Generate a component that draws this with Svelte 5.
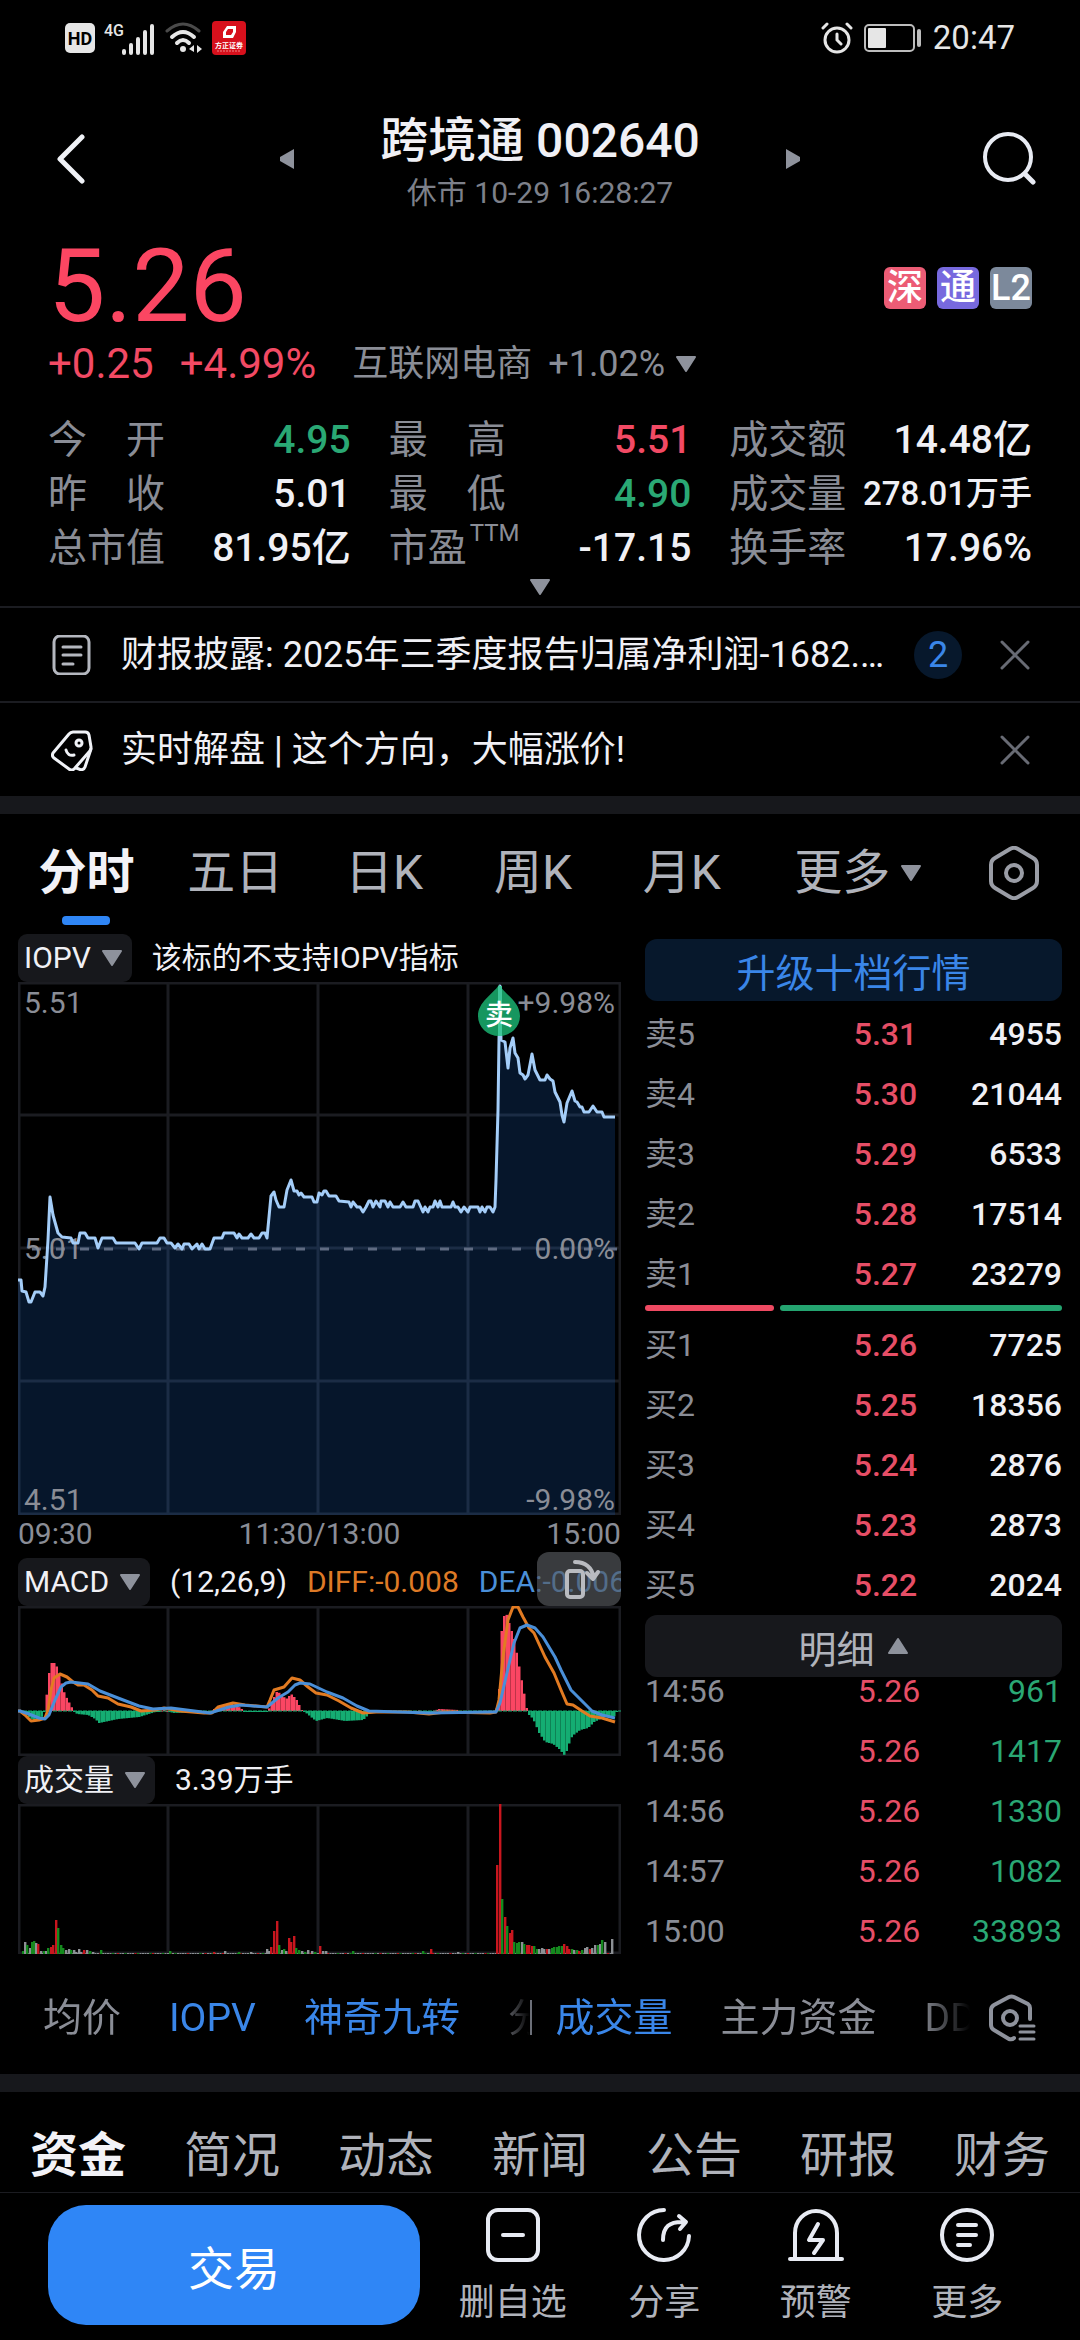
<script>
  const stats = [
    { label: '今 开', value: '4.95', tone: 'down' },
    { label: '最 高', value: '5.51', tone: 'up' },
    { label: '成交额', value: '14.48亿', tone: '' },
    { label: '昨 收', value: '5.01', tone: '' },
    { label: '最 低', value: '4.90', tone: 'down' },
    { label: '成交量', value: '278.01万手', tone: '', small: true },
    { label: '总市值', value: '81.95亿', tone: '' },
    { label: '市盈', sup: 'TTM', value: '-17.15', tone: '' },
    { label: '换手率', value: '17.96%', tone: '' }
  ];
  const periods = ['分时', '五日', '日K', '周K', '月K'];
  const sells = [
    ['卖5', '5.31', '4955'],
    ['卖4', '5.30', '21044'],
    ['卖3', '5.29', '6533'],
    ['卖2', '5.28', '17514'],
    ['卖1', '5.27', '23279']
  ];
  const buys = [
    ['买1', '5.26', '7725'],
    ['买2', '5.25', '18356'],
    ['买3', '5.24', '2876'],
    ['买4', '5.23', '2873'],
    ['买5', '5.22', '2024']
  ];
  const trades = [
    ['14:56', '5.26', '961'],
    ['14:56', '5.26', '1417'],
    ['14:56', '5.26', '1330'],
    ['14:57', '5.26', '1082'],
    ['15:00', '5.26', '33893']
  ];
  const sections = ['资金', '简况', '动态', '新闻', '公告', '研报', '财务'];

  // Intraday price, chart units (603 x 533)
  const price =
    '0,298 3,298 4,309 8,310 11,320 13,320 17,310 22,310 25,314 27,305 30,258 32,215 35,233 40,251 44,255 53,256 55,261 60,261 62,251 67,251 70,256 77,256 80,266 84,256 95,256 98,261 117,261 121,267 124,261 139,261 142,256 146,256 149,261 153,261 157,266 160,262 164,267 166,262 171,262 174,267 179,262 181,267 184,262 187,267 192,267 196,256 204,256 206,251 216,251 219,256 221,252 224,256 230,256 233,252 236,256 241,256 244,251 247,251 249,256 251,235 253,214 256,210 258,218 261,225 266,225 269,208 273,198 276,209 279,209 281,213 283,211 286,215 294,215 296,220 299,220 301,211 304,213 306,209 308,209 311,214 318,214 321,219 331,220 333,225 335,220 339,225 342,225 345,230 348,225 351,219 353,219 355,225 358,219 362,225 363,219 367,219 370,225 372,220 375,225 382,225 385,220 388,225 395,225 397,219 400,219 405,230 407,225 410,230 412,225 415,225 417,219 420,225 422,219 424,225 433,225 435,220 437,225 440,225 443,230 446,225 450,230 452,225 460,225 462,230 464,225 467,230 469,225 472,225 475,230 477,225 478,198 480,128 481,58 482,4 483,58 487,60 490,86 492,66 495,56 497,71 500,76 502,91 505,93 507,97 510,93 514,72 517,88 522,98 527,98 529,93 532,97 535,99 537,110 542,120 544,133 546,140 549,121 554,109 557,119 559,120 562,125 564,125 566,130 571,130 575,124 579,130 584,130 586,135 597,135';

  const diff =
    '0,105 2,105 7,109 13,115 21,114 27,112 30,104 33,84 36,72 42,68 49,71 55,76 60,79 66,79 74,84 80,90 90,92 100,98 113,101 123,105 137,104 146,102 162,105 186,107 194,107 200,101 215,97 227,99 249,101 252,94 256,84 266,81 274,72 282,74 290,81 298,87 309,89 321,95 333,102 345,107 358,106 390,106 411,108 427,106 472,107 478,106 481,94 485,51 490,14 495,1 500,1 505,11 511,22 516,27 527,51 536,67 543,84 549,98 555,99 564,105 572,110 584,112 597,116';
  const dea =
    '0,105 2,105 11,108 21,112 27,113 31,109 37,94 43,81 48,77 53,76 70,78 82,85 100,92 121,100 135,103 153,102 192,107 211,101 223,99 249,101 260,92 270,86 277,79 282,77 292,78 309,86 325,92 339,100 351,105 411,107 472,106 478,106 482,97 488,71 496,37 502,22 509,19 517,22 525,31 537,51 543,64 553,84 566,97 574,105 584,109 597,112';

  // Outline of the MACD histogram: [x, height], interpolated to one bar per step
  const envelope = [
    [0, 0], [7, -3], [15, -9], [23, -7], [26, 0], [28, 12], [31, 38], [34, 50], [38, 46], [42, 34], [45, 21], [49, 12], [53, 5],
    [55, 0], [59, -3], [70, -4], [77, -8], [81, -12], [100, -8], [121, -6], [137, -1], [146, 1], [155, -2], [192, -1], [196, 2],
    [211, 8], [223, 3], [225, -1], [249, -1], [250, 0], [253, 8], [259, 20], [268, 12], [273, 17], [278, 12], [284, 0], [288, -2],
    [294, -7], [298, -10], [309, -7], [327, -10], [345, -9], [351, -3], [357, -1], [398, -1], [400, 1], [404, -1], [415, 0], [421, 2],
    [440, 1], [442, -1], [477, -1], [479, 4], [481, 22], [483, 77], [487, 101], [491, 88], [496, 72], [500, 50], [504, 28],
    [507, 12], [509, 0], [510, -3], [515, -8], [521, -22], [527, -31], [535, -33], [541, -38], [547, -45], [550, -35], [554, -25],
    [562, -19], [570, -17], [576, -11], [586, -6], [598, -5]
  ];
  function sample(x) {
    for (let i = 1; i < envelope.length; i++) {
      const [x1, y1] = envelope[i];
      if (x <= x1) {
        const [x0, y0] = envelope[i - 1];
        return y0 + ((y1 - y0) * (x - x0)) / (x1 - x0);
      }
    }
    return 0;
  }
  const macdBars = Array.from({ length: 240 }, (_, i) => {
    const x = i * 2.5;
    return { x, h: sample(x + 1) };
  });

  const R = '#c8161e';
  const G = '#158a1e';
  const W = '#8c9094';
  const volume = [
    [5, 3, G], [7, 12, W], [9, 9, G], [12, 6, W], [14, 12, G], [16, 13, G], [18, 11, W], [20, 10, R], [23, 3, W], [26, 3, G], [28, 3, W],
    [30, 6, G], [33, 7, R], [35, 9, R], [38, 34, R], [40, 26, G], [43, 9, G], [45, 6, G], [48, 4, W], [51, 5, W], [53, 4, G], [56, 4, W],
    [58, 2, W], [61, 5, W], [63, 2, W], [66, 4, R], [69, 4, W], [72, 3, G], [75, 2, W], [83, 4, G], [152, 3, G], [196, 2, R], [207, 3, W],
    [221, 2, G], [233, 2, W], [249, 5, W], [251, 3, W], [253, 7, R], [256, 23, R], [259, 33, R], [261, 9, G], [264, 4, W], [266, 5, G],
    [268, 3, W], [271, 16, R], [273, 12, R], [276, 18, R], [278, 6, G], [281, 4, G], [284, 3, W], [287, 2, G], [290, 4, W], [294, 3, W],
    [297, 2, G], [302, 8, R], [305, 3, W], [308, 3, W], [335, 3, G], [405, 3, G], [413, 5, R], [440, 2, W], [479, 89, R], [482, 150, R],
    [484, 55, G], [487, 37, R], [489, 28, G], [492, 21, R], [494, 24, R], [496, 12, G], [499, 11, G], [501, 12, G], [504, 12, W],
    [506, 10, G], [509, 9, R], [511, 9, R], [514, 8, R], [516, 8, G], [519, 5, G], [521, 5, W], [524, 6, W], [526, 5, W], [529, 5, R],
    [531, 5, W], [534, 6, G], [536, 7, G], [539, 7, G], [541, 8, G], [544, 8, G], [546, 10, R], [549, 8, R], [551, 5, R], [554, 5, G],
    [556, 4, W], [559, 4, G], [561, 3, R], [564, 4, G], [567, 6, W], [569, 7, W], [572, 5, R], [574, 6, W], [577, 9, W], [580, 9, G],
    [582, 10, W], [584, 14, G], [587, 12, W], [594, 15, W]
  ];
  const quiet = Array.from({ length: 236 }, (_, i) => [4 + i * 2.5, 1, i % 7 === 3 ? R : i % 5 === 1 ? G : W]);
</script>

{#snippet down(size)}
  <svg class={size} viewBox="0 0 22 16" aria-hidden="true"><path d="M2 1h18L11 15z" fill="#8e929c" stroke="#8e929c" stroke-width="2" stroke-linejoin="round" /></svg>
{/snippet}

{#snippet close()}
  <svg class="i30" viewBox="0 0 30 30" fill="none" stroke="#686b74" stroke-width="3" stroke-linecap="round" aria-hidden="true"><path d="M2 2l26 26M28 2L2 28" /></svg>
{/snippet}

{#snippet subgrid()}
  <g stroke="#1b1c21" stroke-width="3" fill="none">
    <path d="M150 0V150M300 0V150M450 0V150" />
    <rect x="1" y="1" width="601" height="148" />
  </g>
{/snippet}

<div class="app">
  <div class="status">
    <div class="status-side">
      <svg class="hd" viewBox="0 0 30 30" aria-hidden="true">
        <rect width="30" height="30" rx="5" fill="#e6e6e6" />
        <text x="15" y="22" text-anchor="middle" font-size="18" font-weight="700" fill="#000">HD</text>
      </svg>
      <svg class="signal" viewBox="0 0 52 34" aria-hidden="true">
        <text x="0" y="15" font-size="16" font-weight="500" fill="#e6e6e6">4G</text>
        <path d="M20 30v2M27 24v8M34 18v14M41 11v21M48 5v27" stroke="#e6e6e6" stroke-width="4" stroke-linecap="round" />
      </svg>
      <svg class="wifi" viewBox="0 0 38 32" fill="none" stroke-linecap="round" aria-hidden="true">
        <path d="M2 9Q18-5 34 9" stroke="#4a4a4a" stroke-width="3" />
        <path d="M7 15Q18 5 29 15" stroke="#e6e6e6" stroke-width="4" />
        <path d="M12 21Q18 15 24 21" stroke="#e6e6e6" stroke-width="4" />
        <circle cx="18" cy="27" r="3" fill="#e6e6e6" />
        <path d="M29 23v7l-5-3zM32 23v8l5-4z" fill="#e6e6e6" />
      </svg>
      <svg class="broker" viewBox="0 0 34 34" aria-hidden="true">
        <rect width="34" height="34" rx="4" fill="#d7101c" />
        <path d="M15 5h9v6l-3 6h-10v-6z M16 8l-2 3v3h5l2-3V8z" fill="#fff" fill-rule="evenodd" />
        <text x="17" y="27" text-anchor="middle" font-size="7" font-weight="700" fill="#fff">方正证券</text>
        <path d="M5 30h24" stroke="#e88" stroke-width="1" stroke-dasharray="2 1" />
      </svg>
    </div>
    <div class="status-side right">
      <svg class="alarm" viewBox="0 0 32 32" fill="none" stroke="#e6e6e6" stroke-width="3" stroke-linecap="round" aria-hidden="true">
        <circle cx="16" cy="18" r="12" />
        <path d="M16 12v6l4 4M2 6l4-4M30 6l-4-4" />
      </svg>
      <svg class="battery" viewBox="0 0 58 28" aria-hidden="true">
        <rect x="1" y="1" width="49" height="26" rx="4" fill="none" stroke="#bdbdbd" stroke-width="2" />
        <rect x="4" y="4" width="18" height="20" rx="1" fill="#e6e6e6" />
        <path d="M55 7v14" stroke="#bdbdbd" stroke-width="4" stroke-linecap="round" />
      </svg>
      <span class="clock">20:47</span>
    </div>
  </div>

  <header class="top">
    <button class="go-back" aria-label="返回"><svg class="back" viewBox="0 0 30 50" fill="none" stroke="#f0f2f7" stroke-width="5" stroke-linecap="round" stroke-linejoin="round"><path d="M26 3L4 25l22 22" /></svg></button>
    <button aria-label="上一只"><svg class="side" viewBox="0 0 14 20"><path d="M14 0v20L0 12v-4z" fill="#8e929c" /></svg></button>
    <div class="title">
      <h1>跨境通 002640</h1>
      <p>休市 10-29 16:28:27</p>
    </div>
    <button aria-label="下一只"><svg class="side" viewBox="0 0 14 20"><path d="M0 0v20l14-8v-4z" fill="#8e929c" /></svg></button>
    <button class="go-search" aria-label="搜索"><svg class="search" viewBox="0 0 54 54" fill="none" stroke="#e8ebf3" stroke-linecap="round"><circle cx="26" cy="25" r="23" stroke-width="4" /><path d="M43 42l8 8" stroke-width="5" /></svg></button>
  </header>

  <section class="quote">
    <div class="price-row">
      <strong class="price">5.26</strong>
      <div class="badges">
        <span class="badge sz">深</span>
        <span class="badge tong">通</span>
        <span class="badge l2">L2</span>
      </div>
    </div>
    <div class="change">
      <span class="delta up">+0.25</span>
      <span class="delta up">+4.99%</span>
      <button class="sector"><span>互联网电商</span><span class="sector-pct">+1.02%{@render down('tri')}</span></button>
    </div>
    <dl class="stats">
      {#each stats as s}
        <div class="stat">
          <dt class:just={s.label.includes(' ')}>{s.label}{#if s.sup}<sup>{s.sup}</sup>{/if}</dt>
          <dd class={s.tone} class:small={s.small}>{s.value}</dd>
        </div>
      {/each}
    </dl>
    <button class="expand" aria-label="展开">{@render down('tri')}</button>
  </section>

  <div class="notice">
    <svg class="i40" viewBox="0 0 40 40" fill="none" stroke="#b4b7bf" stroke-width="3" stroke-linecap="round" aria-hidden="true"><rect x="3" y="1" width="35" height="38" rx="6" /><path d="M12 12h18M12 20h18M12 29h10" /></svg>
    <a href="#report">财报披露: 2025年三季度报告归属净利润-1682.…</a>
    <span class="count">2</span>
    <button aria-label="关闭">{@render close()}</button>
  </div>
  <div class="notice">
    <svg class="i42" viewBox="0 0 42 42" fill="none" stroke="#f0f2f7" stroke-width="3" stroke-linecap="round" stroke-linejoin="round" aria-hidden="true">
      <path d="M22 3h12a4 4 0 0 1 4 3l2 12a6 6 0 0 1-2 5L24 39a4 4 0 0 1-6 1L3 29a4 4 0 0 1-1-5L18 5a6 6 0 0 1 4-2z" />
      <path d="M40 20l-6 18a4 4 0 0 1-6 2l-3-1" />
      <circle cx="28" cy="14" r="3" /><path d="M15 21c1 4 4 6 8 5" />
    </svg>
    <a href="#live">实时解盘 | 这个方向，大幅涨价!</a>
    <button aria-label="关闭">{@render close()}</button>
  </div>
  <div class="band"></div>

  <nav class="periods">
    {#each periods as p, i}
      <button class:active={i === 0}>{p}</button>
    {/each}
    <button class="more">更多{@render down('tri')}</button>
    <button aria-label="设置"><svg class="hex" viewBox="0 0 54 54" fill="none" stroke="#9a9da6" stroke-width="4" stroke-linejoin="round"><path d="M23 3a8 8 0 0 1 8 0l15 9a8 8 0 0 1 4 7v16a8 8 0 0 1-4 7l-15 9a8 8 0 0 1-8 0L8 42a8 8 0 0 1-4-7V19a8 8 0 0 1 4-7z" /><circle cx="27" cy="27" r="8" /></svg></button>
  </nav>

  <main>
    <div class="charts">
      <div class="bar">
        <button class="chip">IOPV{@render down('tri')}</button>
        <span>该标的不支持IOPV指标</span>
      </div>
      <svg class="chart" viewBox="0 0 603 533" role="img" aria-label="分时走势">
        <g stroke="#1b1c21" stroke-width="3" fill="none">
          <path d="M150 0V533M300 0V533M450 0V533M0 133H603M0 266H603M0 399H603" />
          <rect x="1" y="1" width="601" height="531" />
        </g>
        <polygon points="0,533 {price} 597,533" fill="#1e6fd8" fill-opacity="0.2" />
        <path d="M14 267H603" stroke="#5f6b82" stroke-width="3" stroke-dasharray="9 15" />
        <g font-size="30" fill="#8a8d96">
          <text x="6" y="31">5.51</text>
          <text x="6" y="277">5.01</text>
          <text x="6" y="528">4.51</text>
          <text x="597" y="31" text-anchor="end">+9.98%</text>
          <text x="597" y="277" text-anchor="end">0.00%</text>
          <text x="597" y="528" text-anchor="end">-9.98%</text>
        </g>
        <polyline points={price} fill="none" stroke="#a4cdf8" stroke-width="3" stroke-linejoin="round" />
        <path d="M481 3C488 13 502 20 502 34A21 20 0 0 1 460 34C460 20 474 13 481 3z" fill="#16965f" />
        <path d="M482 4V54" stroke="#3fc79a" stroke-width="4" />
        <text x="481" y="43" text-anchor="middle" font-size="28" font-weight="500" fill="#fff">卖</text>
      </svg>
      <div class="times"><span>09:30</span><span>11:30/13:00</span><span>15:00</span></div>

      <div class="bar macd">
        <button class="chip">MACD{@render down('tri')}</button>
        <span>(12,26,9)</span>
        <span class="diff">DIFF:-0.008</span>
        <span class="dea">DEA:-0.006</span>
        <button class="rotate" aria-label="横屏"><svg viewBox="0 0 84 54" fill="none" stroke="#b9bbc0" stroke-width="4" stroke-linecap="round" stroke-linejoin="round"><rect x="30" y="19" width="16" height="26" rx="3" /><path d="M38 10c11 0 17 6 19 16M50 21l6 6 5-7" /></svg></button>
      </div>
      <svg class="chart" viewBox="0 0 603 150" role="img" aria-label="MACD">
        {@render subgrid()}
        {#each macdBars as b}
          <rect x={b.x} y={b.h > 0 ? 105 - b.h : 105} width="2.500" height={Math.max(1, Math.abs(b.h))} fill={b.h > 0 ? '#fb4663' : '#14ad72'} />
        {/each}
        <path d="M0 105H603" stroke="#14ad72" stroke-width="1" stroke-dasharray="4 1" />
        <polyline points={diff} fill="none" stroke="#e27b22" stroke-width="3" stroke-linejoin="round" />
        <polyline points={dea} fill="none" stroke="#4a8fd8" stroke-width="3" stroke-linejoin="round" />
      </svg>

      <div class="bar">
        <button class="chip">成交量{@render down('tri')}</button>
        <span>3.39万手</span>
      </div>
      <svg class="chart" viewBox="0 0 603 150" role="img" aria-label="成交量">
        {@render subgrid()}
        {#each quiet as [x, h, c]}
          <rect {x} y={150 - h} width="2" height={h} fill={c} />
        {/each}
        {#each volume as [x, h, c]}
          <rect x={x - 1} y={150 - h} width="2.400" height={h} fill={c} />
        {/each}
      </svg>
    </div>

    <div class="book">
      <button class="upgrade">升级十档行情</button>
      <table class="orders">
        <tbody>
          {#each sells as [n, p, v]}
            <tr><th scope="row">{n}</th><td class="p">{p}</td><td>{v}</td></tr>
          {/each}
        </tbody>
      </table>
      <div class="ratio"><i class="buy"></i><i class="sell"></i></div>
      <table class="orders">
        <tbody>
          {#each buys as [n, p, v]}
            <tr><th scope="row">{n}</th><td class="p">{p}</td><td>{v}</td></tr>
          {/each}
        </tbody>
      </table>
      <button class="detail">明细<svg class="tri" viewBox="0 0 22 16"><path d="M2 15h18L11 1z" fill="#8e929c" stroke="#8e929c" stroke-width="2" stroke-linejoin="round" /></svg></button>
      <div class="trades">
        <table>
          <tbody>
            {#each trades as [t, p, v]}
              <tr><th scope="row">{t}</th><td class="p">{p}</td><td class="vol">{v}</td></tr>
            {/each}
          </tbody>
        </table>
      </div>
    </div>
  </main>

  <div class="indicators">
    <div class="scroll main-set">
      <button>均价</button>
      <button class="on">IOPV</button>
      <button class="on">神奇九转</button>
      <button>分时</button>
    </div>
    <i class="divider"></i>
    <div class="scroll sub-set">
      <button class="on">成交量</button>
      <button>主力资金</button>
      <button>DDX</button>
    </div>
    <button class="gear" aria-label="指标设置"><svg class="i48" viewBox="0 0 48 48" fill="none" stroke="#8e929c" stroke-width="4" stroke-linecap="round" stroke-linejoin="round"><path d="M42 25V14a5 5 0 0 0-2-4L26 3a6 6 0 0 0-5 0L6 11a6 6 0 0 0-3 5v15a6 6 0 0 0 3 5l15 9q3 1 5-1" /><circle cx="22" cy="24" r="7" /><path d="M32 32h14M32 38h14M32 45h14" stroke-width="3" /></svg></button>
  </div>
  <div class="band"></div>

  <nav class="sections">
    {#each sections as s, i}
      <button class:active={i === 0}>{s}</button>
    {/each}
  </nav>

  <footer>
    <button class="trade">交易</button>
    <div class="actions">
      <button><svg class="i56" viewBox="0 0 56 56"><rect x="3" y="3" width="50" height="50" rx="10" /><path d="M18 28h20" /></svg>删自选</button>
      <button><svg class="i56" viewBox="0 0 56 56"><path d="M28 3a25 25 0 1 0 25 26M27 33c0-13 6-19 22-18M43 9l7 6-6 7" /></svg>分享</button>
      <button><svg class="i56" viewBox="0 0 56 56"><path d="M7 52V26a21 22 0 0 1 42 0v26M2 52h52M30 17l-9 16h14l-9 13" /></svg>预警</button>
      <button><svg class="i56" viewBox="0 0 56 56"><circle cx="28" cy="28" r="25" /><path d="M19 18h18M19 28h18M19 38h12" /></svg>更多</button>
    </div>
  </footer>
</div>

<style>
  :global(body) {
    background: #000;
  }
  .app {
    background: #000;
    color: #f0f0f5;
    font-family: Roboto, 'Noto Sans CJK SC', sans-serif;
    font-size: 36px;
    overflow: hidden;
  }
  .app * {
    box-sizing: border-box;
  }
  button {
    display: flex;
    align-items: center;
    justify-content: center;
    padding: 0;
    border: 0;
    background: none;
    color: inherit;
    font: inherit;
    white-space: nowrap;
  }
  a {
    color: inherit;
    text-decoration: none;
  }
  svg {
    display: block;
    flex: none;
  }
  .tri { width: 22px; height: 16px; }
  .i30 { width: 30px; height: 30px; }
  .i40 { width: 40px; height: 40px; }
  .i42 { width: 42px; height: 42px; }
  .i48 { width: 48px; height: 48px; }
  .i56 { width: 56px; height: 56px; }
  .up { color: #f24a64; }
  .down { color: #2aa874; }

  .status {
    display: flex;
    justify-content: space-between;
    align-items: center;
    height: 76px;
    padding: 0 65px;
    color: #e6e6e6;
  }
  .status-side {
    display: flex;
    align-items: center;
    gap: 9px;
  }
  .status-side.right { gap: 11px; }
  .hd { width: 30px; height: 30px; }
  .signal { width: 52px; height: 34px; }
  .wifi { width: 38px; height: 32px; }
  .broker { width: 34px; height: 34px; }
  .alarm { width: 32px; height: 32px; }
  .battery { width: 58px; height: 28px; }
  .clock { font-size: 33px; line-height: 40px; }

  .top {
    display: grid;
    grid-template-columns: 1fr auto auto auto 1fr;
    column-gap: 86px;
    align-items: center;
    margin-top: 27px;
    padding: 0 44px;
  }
  .go-back {
    justify-self: start;
    padding-left: 12px;
  }
  .go-search { justify-self: end; }
  .back { width: 30px; height: 50px; }
  .side { width: 14px; height: 20px; }
  .search { width: 54px; height: 54px; }
  .title {
    padding-top: 8px;
    text-align: center;
  }
  h1 {
    margin: 0;
    font-size: 48px;
    font-weight: 500;
    line-height: 60px;
  }
  .title p {
    margin: 0;
    font-size: 30px;
    line-height: 44px;
    color: #7d808a;
  }

  .quote { padding: 16px 48px 0; }
  .price-row {
    display: flex;
    align-items: center;
    justify-content: space-between;
  }
  .price {
    font-size: 102px;
    font-weight: 400;
    line-height: 110px;
    color: #fb4662;
  }
  .badges {
    display: flex;
    gap: 11px;
    padding-top: 4px;
  }
  .badge {
    width: 42px;
    border-radius: 6px;
    color: #fff;
    font-size: 36px;
    font-weight: 500;
    line-height: 42px;
    text-align: center;
  }
  .sz { background: #ec5c75; }
  .tong { background: #7769de; }
  .l2 { background: #7c899b; }
  .change {
    display: flex;
    align-items: center;
    gap: 26px;
    line-height: 46px;
  }
  .delta { font-size: 42px; }
  .sector {
    gap: 16px;
    margin-left: 10px;
    color: #8a8d96;
  }
  .sector-pct {
    display: flex;
    align-items: center;
    gap: 10px;
  }

  .stats {
    display: grid;
    grid-template-columns: repeat(3, 1fr);
    column-gap: 38px;
    margin: 26px 0 0;
    font-size: 39px;
    line-height: 54px;
  }
  .stat {
    display: flex;
    justify-content: space-between;
    white-space: nowrap;
  }
  dt {
    display: flex;
    color: #8a8d96;
  }
  dt.just {
    display: block;
    width: 117px;
    text-align-last: justify;
  }
  sup {
    font-size: 24px;
    line-height: 24px;
    margin-left: 3px;
  }
  dd {
    margin: 0;
    font-weight: 500;
  }
  dd.small { font-size: 33px; }
  .expand {
    width: 100%;
    padding: 4px 0 11px;
  }

  .notice {
    display: flex;
    align-items: center;
    height: 95px;
    padding: 0 50px 0 51px;
    border-top: 2px solid #1b1c21;
  }
  .notice a {
    flex: 1;
    min-width: 0;
    margin-left: 28px;
    overflow: hidden;
    white-space: nowrap;
    line-height: 48px;
  }
  .i40 { margin-right: 2px; }
  .count {
    width: 48px;
    margin: 0 38px 0 24px;
    border-radius: 50%;
    background: #07182c;
    color: #3a86e8;
    line-height: 48px;
    text-align: center;
  }
  .band {
    height: 18px;
    background: #17181c;
  }

  .periods {
    display: grid;
    grid-template-columns: repeat(5, 149fr) 204fr 108fr;
    padding: 2px 12px 0;
    height: 120px;
    color: #b0b3bb;
    font-size: 48px;
    line-height: 64px;
  }
  .periods button {
    position: relative;
    height: 114px;
  }
  .active {
    color: #f2f2f7;
    font-weight: 700;
  }
  .periods .active::after {
    content: '';
    position: absolute;
    bottom: 5px;
    width: 48px;
    height: 9px;
    border-radius: 4px;
    background: #2f86f6;
  }
  .periods .more { gap: 10px; }
  .hex { width: 54px; height: 54px; }

  main {
    display: grid;
    grid-template-columns: 603fr 417fr;
    column-gap: 24px;
    padding: 0 18px;
  }
  .charts, .book { min-width: 0; }
  .chart {
    width: 100%;
    height: auto;
  }
  .bar {
    position: relative;
    display: flex;
    align-items: center;
    gap: 20px;
    overflow: hidden;
    font-size: 30px;
    line-height: 48px;
    white-space: nowrap;
  }
  .macd { padding-top: 6px; }
  .chip {
    gap: 10px;
    height: 48px;
    padding: 0 9px 0 6px;
    border-radius: 9px;
    background: #17181c;
  }
  .diff { color: #de7a26; }
  .dea { color: #4a8fd8; }
  .rotate {
    position: absolute;
    top: 0;
    right: 0;
    width: 84px;
    height: 54px;
    border-radius: 12px;
    background: rgba(88, 90, 96, 0.65);
  }
  .rotate svg { width: 84px; height: 54px; }
  .times {
    display: flex;
    justify-content: space-between;
    font-size: 30px;
    line-height: 37px;
    color: #8a8d96;
  }

  .book { padding-top: 5px; }
  .upgrade {
    width: 100%;
    height: 62px;
    margin-bottom: 3px;
    border-radius: 12px;
    background: #07182c;
    color: #3a86e8;
    font-size: 39px;
  }
  table {
    width: 100%;
    border-collapse: collapse;
    table-layout: fixed;
    font-size: 32px;
    line-height: 60px;
  }
  th, td {
    padding: 0;
    text-align: right;
    font-weight: 500;
  }
  th {
    width: 25%;
    text-align: left;
    font-weight: 400;
    color: #8a8d96;
  }
  .p {
    width: 41%;
    color: #e64e66;
  }
  .orders .p { padding-right: 3px; }
  .ratio {
    display: flex;
    gap: 6px;
    padding: 1px 0 4px;
  }
  .ratio i {
    height: 6px;
    border-radius: 3px;
  }
  .buy { flex: 129; background: #ee4a62; }
  .sell { flex: 282; background: #24a470; }
  .detail {
    gap: 12px;
    width: 100%;
    height: 62px;
    border-radius: 12px;
    background: #17181c;
    color: #b0b3bb;
    font-size: 38px;
  }
  .trades { overflow: hidden; }
  .trades table { margin-top: -16px; }
  .trades td { font-weight: 400; }
  .trades .vol { color: #2aa874; }

  .indicators {
    display: flex;
    align-items: center;
    height: 113px;
    padding: 0 44px 0 43px;
    color: #8a8d96;
    font-size: 39px;
    line-height: 48px;
  }
  .scroll {
    display: flex;
    gap: 48px;
    min-width: 0;
    overflow: hidden;
  }
  .scroll .on { color: #3a86e8; }
  .main-set {
    flex: 486 1 0;
    mask-image: linear-gradient(90deg, #000 93%, transparent);
  }
  .divider {
    width: 2px;
    height: 35px;
    background: #6c6f78;
  }
  .sub-set {
    flex: 414 1 0;
    margin-left: 24px;
    mask-image: linear-gradient(90deg, #000 88%, transparent);
  }
  .gear { margin-left: 18px; }

  .sections {
    display: grid;
    grid-template-columns: repeat(7, 1fr);
    padding: 32px 1px 4px;
    color: #b0b3bb;
    font-size: 48px;
    line-height: 64px;
  }

  footer {
    display: flex;
    gap: 17px;
    padding: 12px 37px 15px 48px;
    border-top: 1px solid #1b1c21;
  }
  .trade {
    flex: 372;
    height: 120px;
    border-radius: 38px;
    background: #2f86f6;
    color: #fff;
    font-size: 46px;
  }
  .actions {
    flex: 606;
    display: grid;
    grid-template-columns: repeat(4, 1fr);
  }
  .actions button {
    flex-direction: column;
    justify-content: space-between;
    padding-top: 2px;
    color: #b0b3bb;
    line-height: 44px;
  }
  .actions svg {
    fill: none;
    stroke: #e8ebf3;
    stroke-width: 4;
    stroke-linecap: round;
    stroke-linejoin: round;
  }
</style>
